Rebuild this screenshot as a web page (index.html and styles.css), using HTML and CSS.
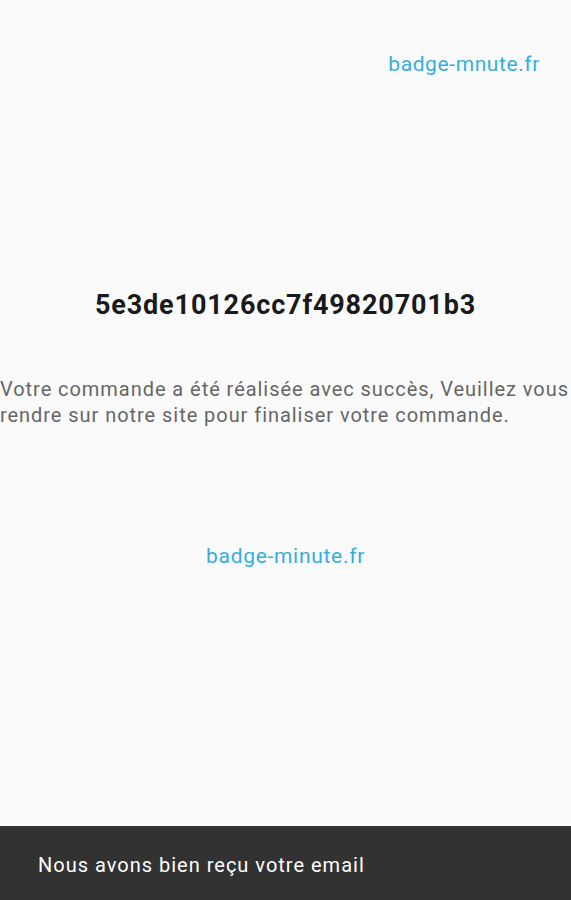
FILE: index.html
```html
<!DOCTYPE html>
<html lang="fr">
<head>
    <meta charset="UTF-8">
    <meta name="viewport" content="width=device-width, initial-scale=1.0">
    <title>Commande</title>
    <link rel="stylesheet" href="styles.css">
</head>
<body>
    <div class="page">
        <div class="top-link">
            <a href="#">badge-mnute.fr</a>
        </div>

        <h2 class="order-code">5e3de10126cc7f49820701b3</h2>

        <p class="message">Votre commande a été réalisée avec succès, Veuillez vous rendre sur notre site pour finaliser votre commande.</p>

        <div class="center-link">
            <a href="#">badge-minute.fr</a>
        </div>
    </div>

    <div class="snackbar">Nous avons bien reçu votre email</div>
</body>
</html>
```

FILE: styles.css
```css
body {
    margin: 0;
    font-family: Roboto, "Noto Sans", sans-serif;
    background-color: #fafafa;
    height: 900px;
    overflow: hidden;
}
a {
    color: #35aede;
    text-decoration: none;
}
.page {
    display: flex;
    flex-direction: column;
}
.top-link {
    text-align: right;
    padding: 50px 31px 0 0;
    font-size: 21px;
    line-height: 28px;
    letter-spacing: 0.6px;
}
.order-code {
    margin: 210px 0 0 0;
    text-align: center;
    font-size: 27px;
    font-weight: bold;
    line-height: 34px;
    letter-spacing: 0.85px;
    color: #1a1a1a;
}
.message {
    margin: 54px 0 0 0;
    font-size: 20px;
    line-height: 26px;
    letter-spacing: 0.95px;
    color: #666666;
}
.center-link {
    margin-top: 114px;
    text-align: center;
    font-size: 21px;
    line-height: 28px;
    letter-spacing: 0.7px;
}
.snackbar {
    position: fixed;
    left: 0;
    right: 0;
    bottom: 0;
    height: 74px;
    box-sizing: border-box;
    padding: 4px 38px 0;
    display: flex;
    align-items: center;
    background-color: #323232;
    color: #ffffff;
    font-size: 20px;
    letter-spacing: 1px;
}
```
